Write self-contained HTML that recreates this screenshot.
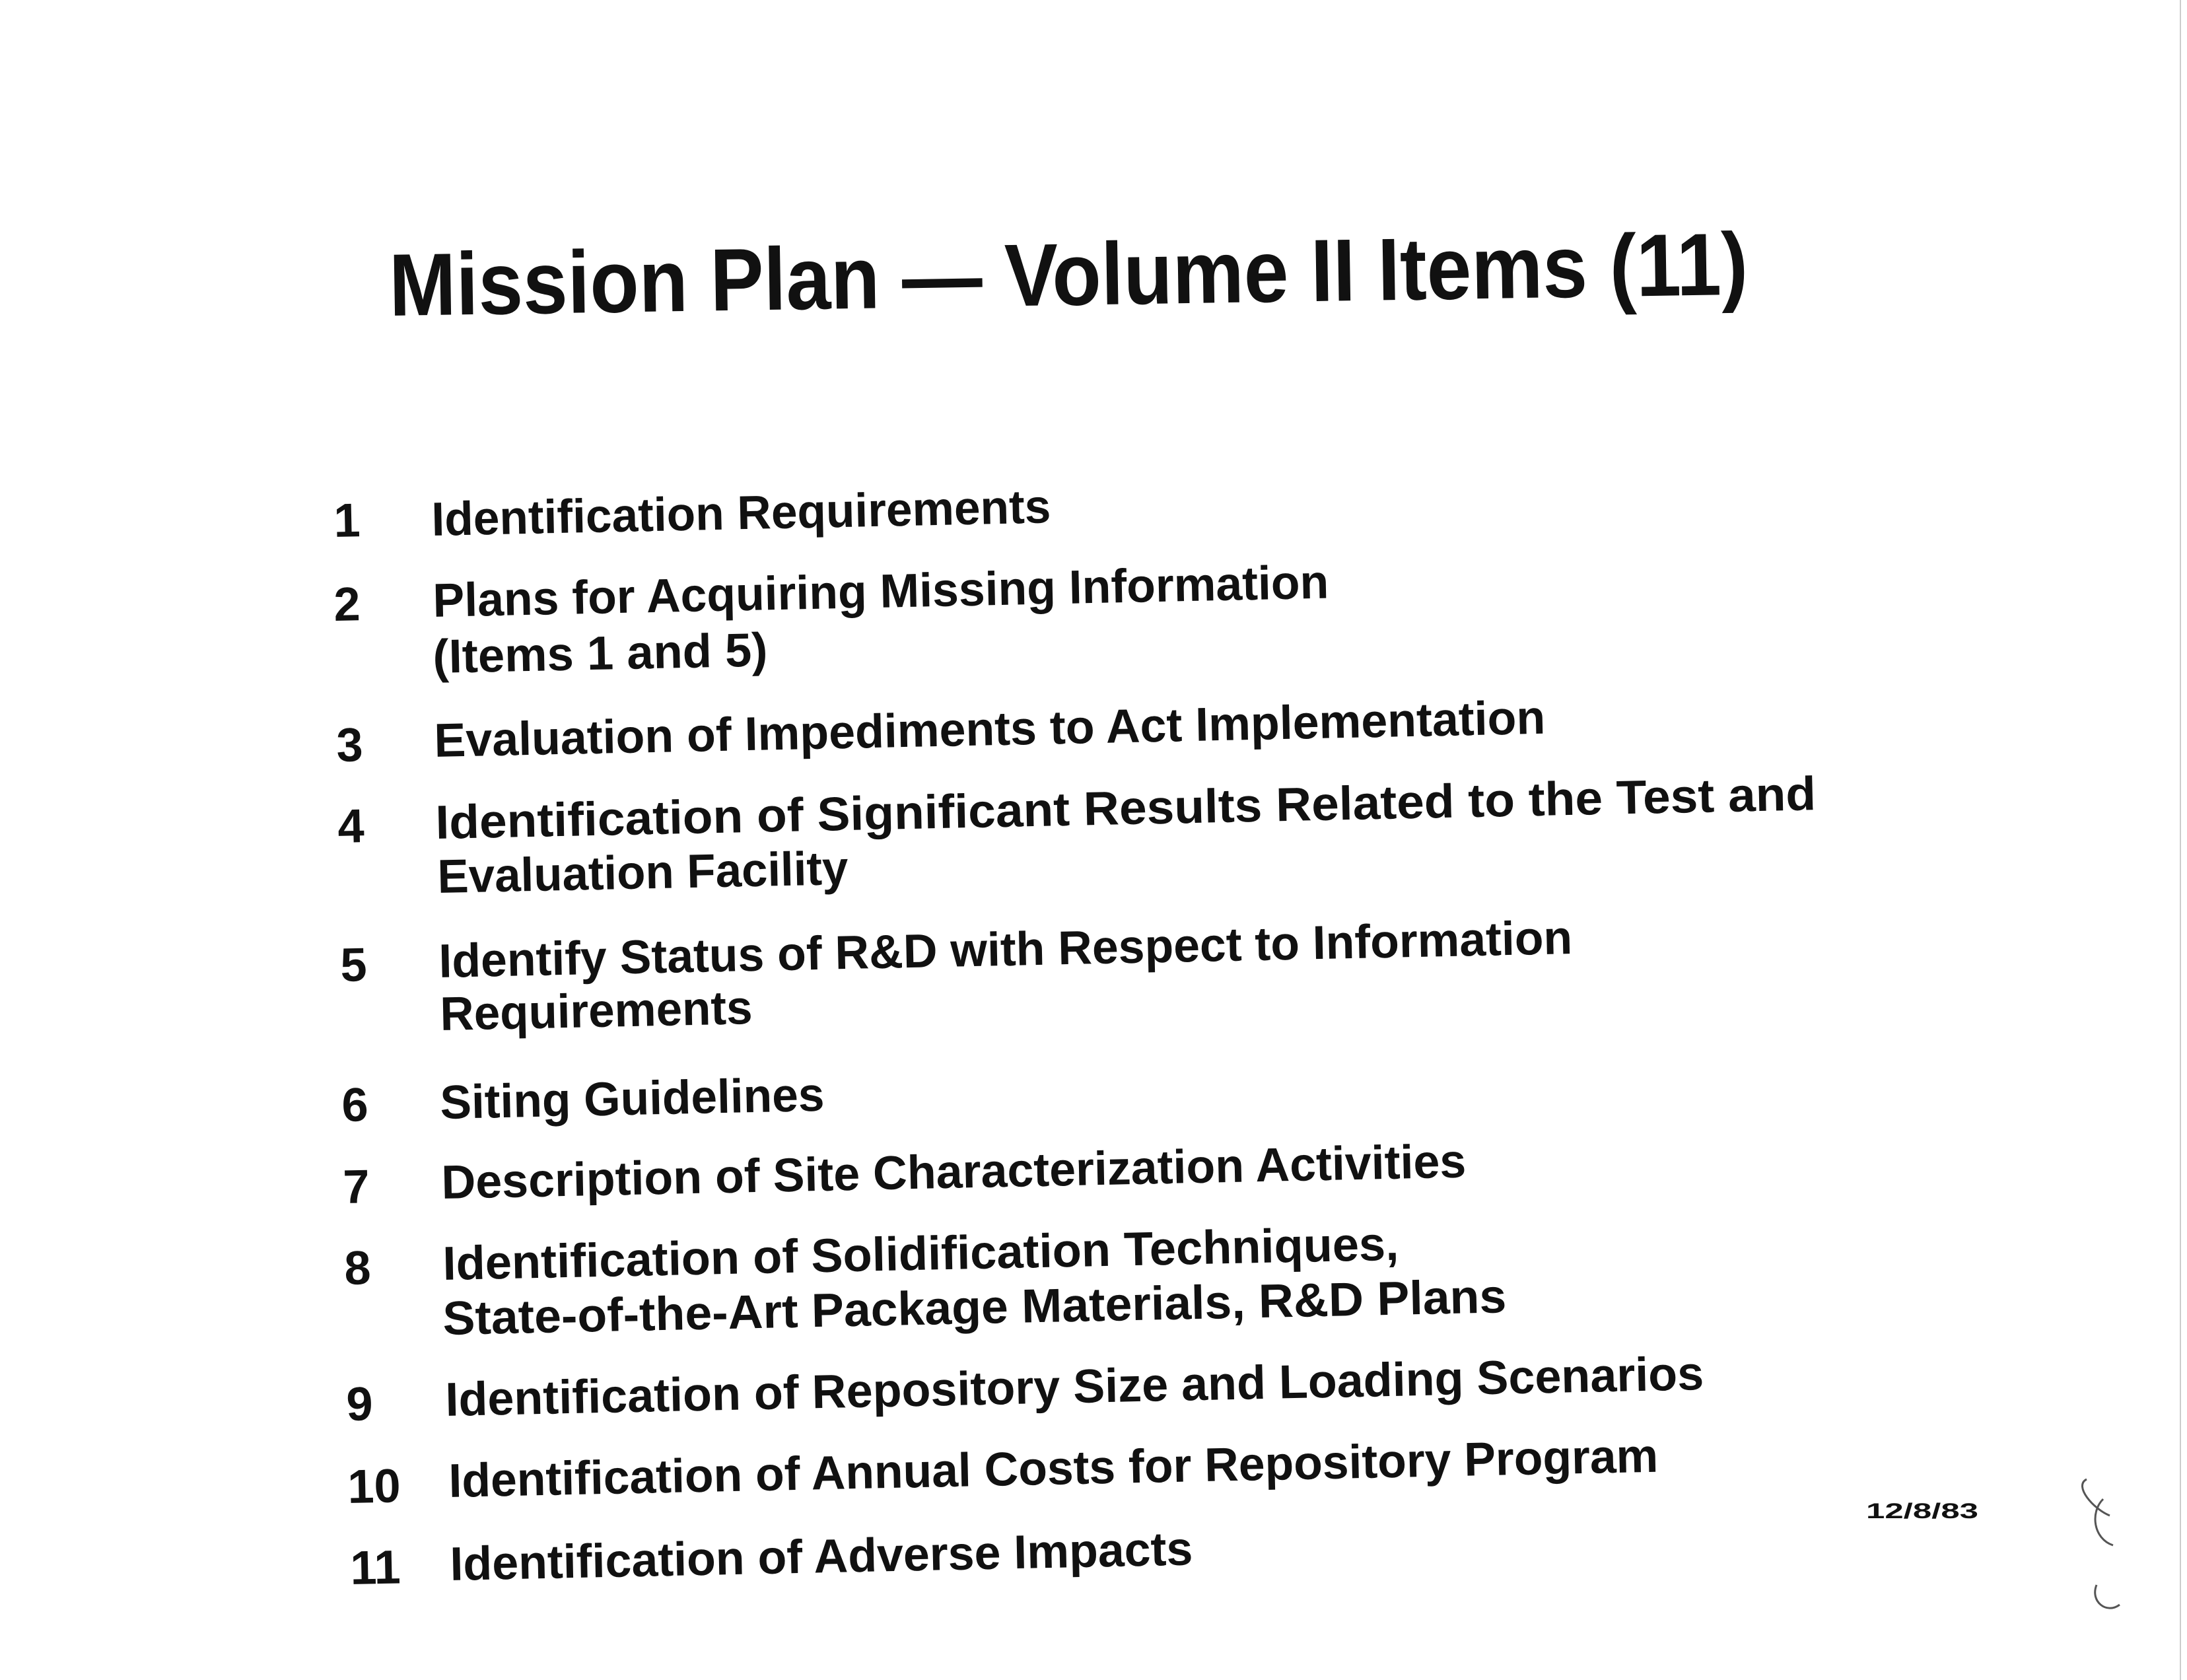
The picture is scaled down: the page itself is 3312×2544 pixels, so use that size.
<!DOCTYPE html>
<html><head><meta charset="utf-8"><style>
html,body{margin:0;padding:0;background:#fff;}
svg{display:block;}
text{font-family:"Liberation Sans",Arial,sans-serif;font-weight:bold;fill:#111;}
</style></head><body>
<svg width="3312" height="2544" viewBox="0 0 3312 2544" xmlns="http://www.w3.org/2000/svg">
<rect width="3312" height="2544" fill="#fff"/>
<line x1="3302" y1="0" x2="3302" y2="2544" stroke="#ccc" stroke-width="2"/>
<text x="590" y="478" font-size="134" textLength="2058" lengthAdjust="spacingAndGlyphs" transform="rotate(-0.9 590 478)">Mission Plan — Volume II Items (11)</text>
<g font-size="72">
<text x="506" y="813" transform="rotate(-1.2 506 813)">1</text>
<text x="654" y="811" textLength="938" lengthAdjust="spacingAndGlyphs" transform="rotate(-1.2 654 811)">Identification Requirements</text>
<text x="506" y="940" transform="rotate(-1.2 506 940)">2</text>
<text x="656" y="934" textLength="1357" lengthAdjust="spacingAndGlyphs" transform="rotate(-1.2 656 934)">Plans for Acquiring Missing Information</text>
<text x="656" y="1019" textLength="507" lengthAdjust="spacingAndGlyphs" transform="rotate(-1.2 656 1019)">(Items 1 and 5)</text>
<text x="510" y="1153" transform="rotate(-1.2 510 1153)">3</text>
<text x="658" y="1146" textLength="1683" lengthAdjust="spacingAndGlyphs" transform="rotate(-1.2 658 1146)">Evaluation of Impediments to Act Implementation</text>
<text x="512" y="1276" transform="rotate(-1.2 512 1276)">4</text>
<text x="660" y="1270" textLength="2091" lengthAdjust="spacingAndGlyphs" transform="rotate(-1.2 660 1270)">Identification of Significant Results Related to the Test and</text>
<text x="663" y="1352" textLength="622" lengthAdjust="spacingAndGlyphs" transform="rotate(-1.2 663 1352)">Evaluation Facility</text>
<text x="516" y="1486" transform="rotate(-1.2 516 1486)">5</text>
<text x="665" y="1480" textLength="1717" lengthAdjust="spacingAndGlyphs" transform="rotate(-1.2 665 1480)">Identify Status of R&amp;D with Respect to Information</text>
<text x="667" y="1560" textLength="473" lengthAdjust="spacingAndGlyphs" transform="rotate(-1.2 667 1560)">Requirements</text>
<text x="518" y="1698" transform="rotate(-1.2 518 1698)">6</text>
<text x="667" y="1694" textLength="582" lengthAdjust="spacingAndGlyphs" transform="rotate(-1.2 667 1694)">Siting Guidelines</text>
<text x="520" y="1822" transform="rotate(-1.2 520 1822)">7</text>
<text x="669" y="1815" textLength="1552" lengthAdjust="spacingAndGlyphs" transform="rotate(-1.2 669 1815)">Description of Site Characterization Activities</text>
<text x="522" y="1945" transform="rotate(-1.2 522 1945)">8</text>
<text x="671" y="1938" textLength="1448" lengthAdjust="spacingAndGlyphs" transform="rotate(-1.2 671 1938)">Identification of Solidification Techniques,</text>
<text x="671" y="2021" textLength="1611" lengthAdjust="spacingAndGlyphs" transform="rotate(-1.2 671 2021)">State-of-the-Art Package Materials, R&amp;D Plans</text>
<text x="525" y="2151" transform="rotate(-1.2 525 2151)">9</text>
<text x="675" y="2144" textLength="1906" lengthAdjust="spacingAndGlyphs" transform="rotate(-1.2 675 2144)">Identification of Repository Size and Loading Scenarios</text>
<text x="527" y="2276" transform="rotate(-1.2 527 2276)">10</text>
<text x="680" y="2267" textLength="1832" lengthAdjust="spacingAndGlyphs" transform="rotate(-1.2 680 2267)">Identification of Annual Costs for Repository Program</text>
<text x="531" y="2399" transform="rotate(-1.2 531 2399)">11</text>
<text x="682" y="2393" textLength="1125" lengthAdjust="spacingAndGlyphs" transform="rotate(-1.2 682 2393)">Identification of Adverse Impacts</text>
</g>
<text x="2826" y="2299" font-size="32" textLength="170" lengthAdjust="spacingAndGlyphs">12/8/83</text>
<path d="M3160 2240 C3140 2250 3170 2285 3195 2295 M3185 2270 C3165 2290 3170 2330 3200 2340 M3175 2400 C3165 2425 3190 2445 3210 2430" stroke="#555" stroke-width="3" fill="none"/>
</svg>
</body></html>
